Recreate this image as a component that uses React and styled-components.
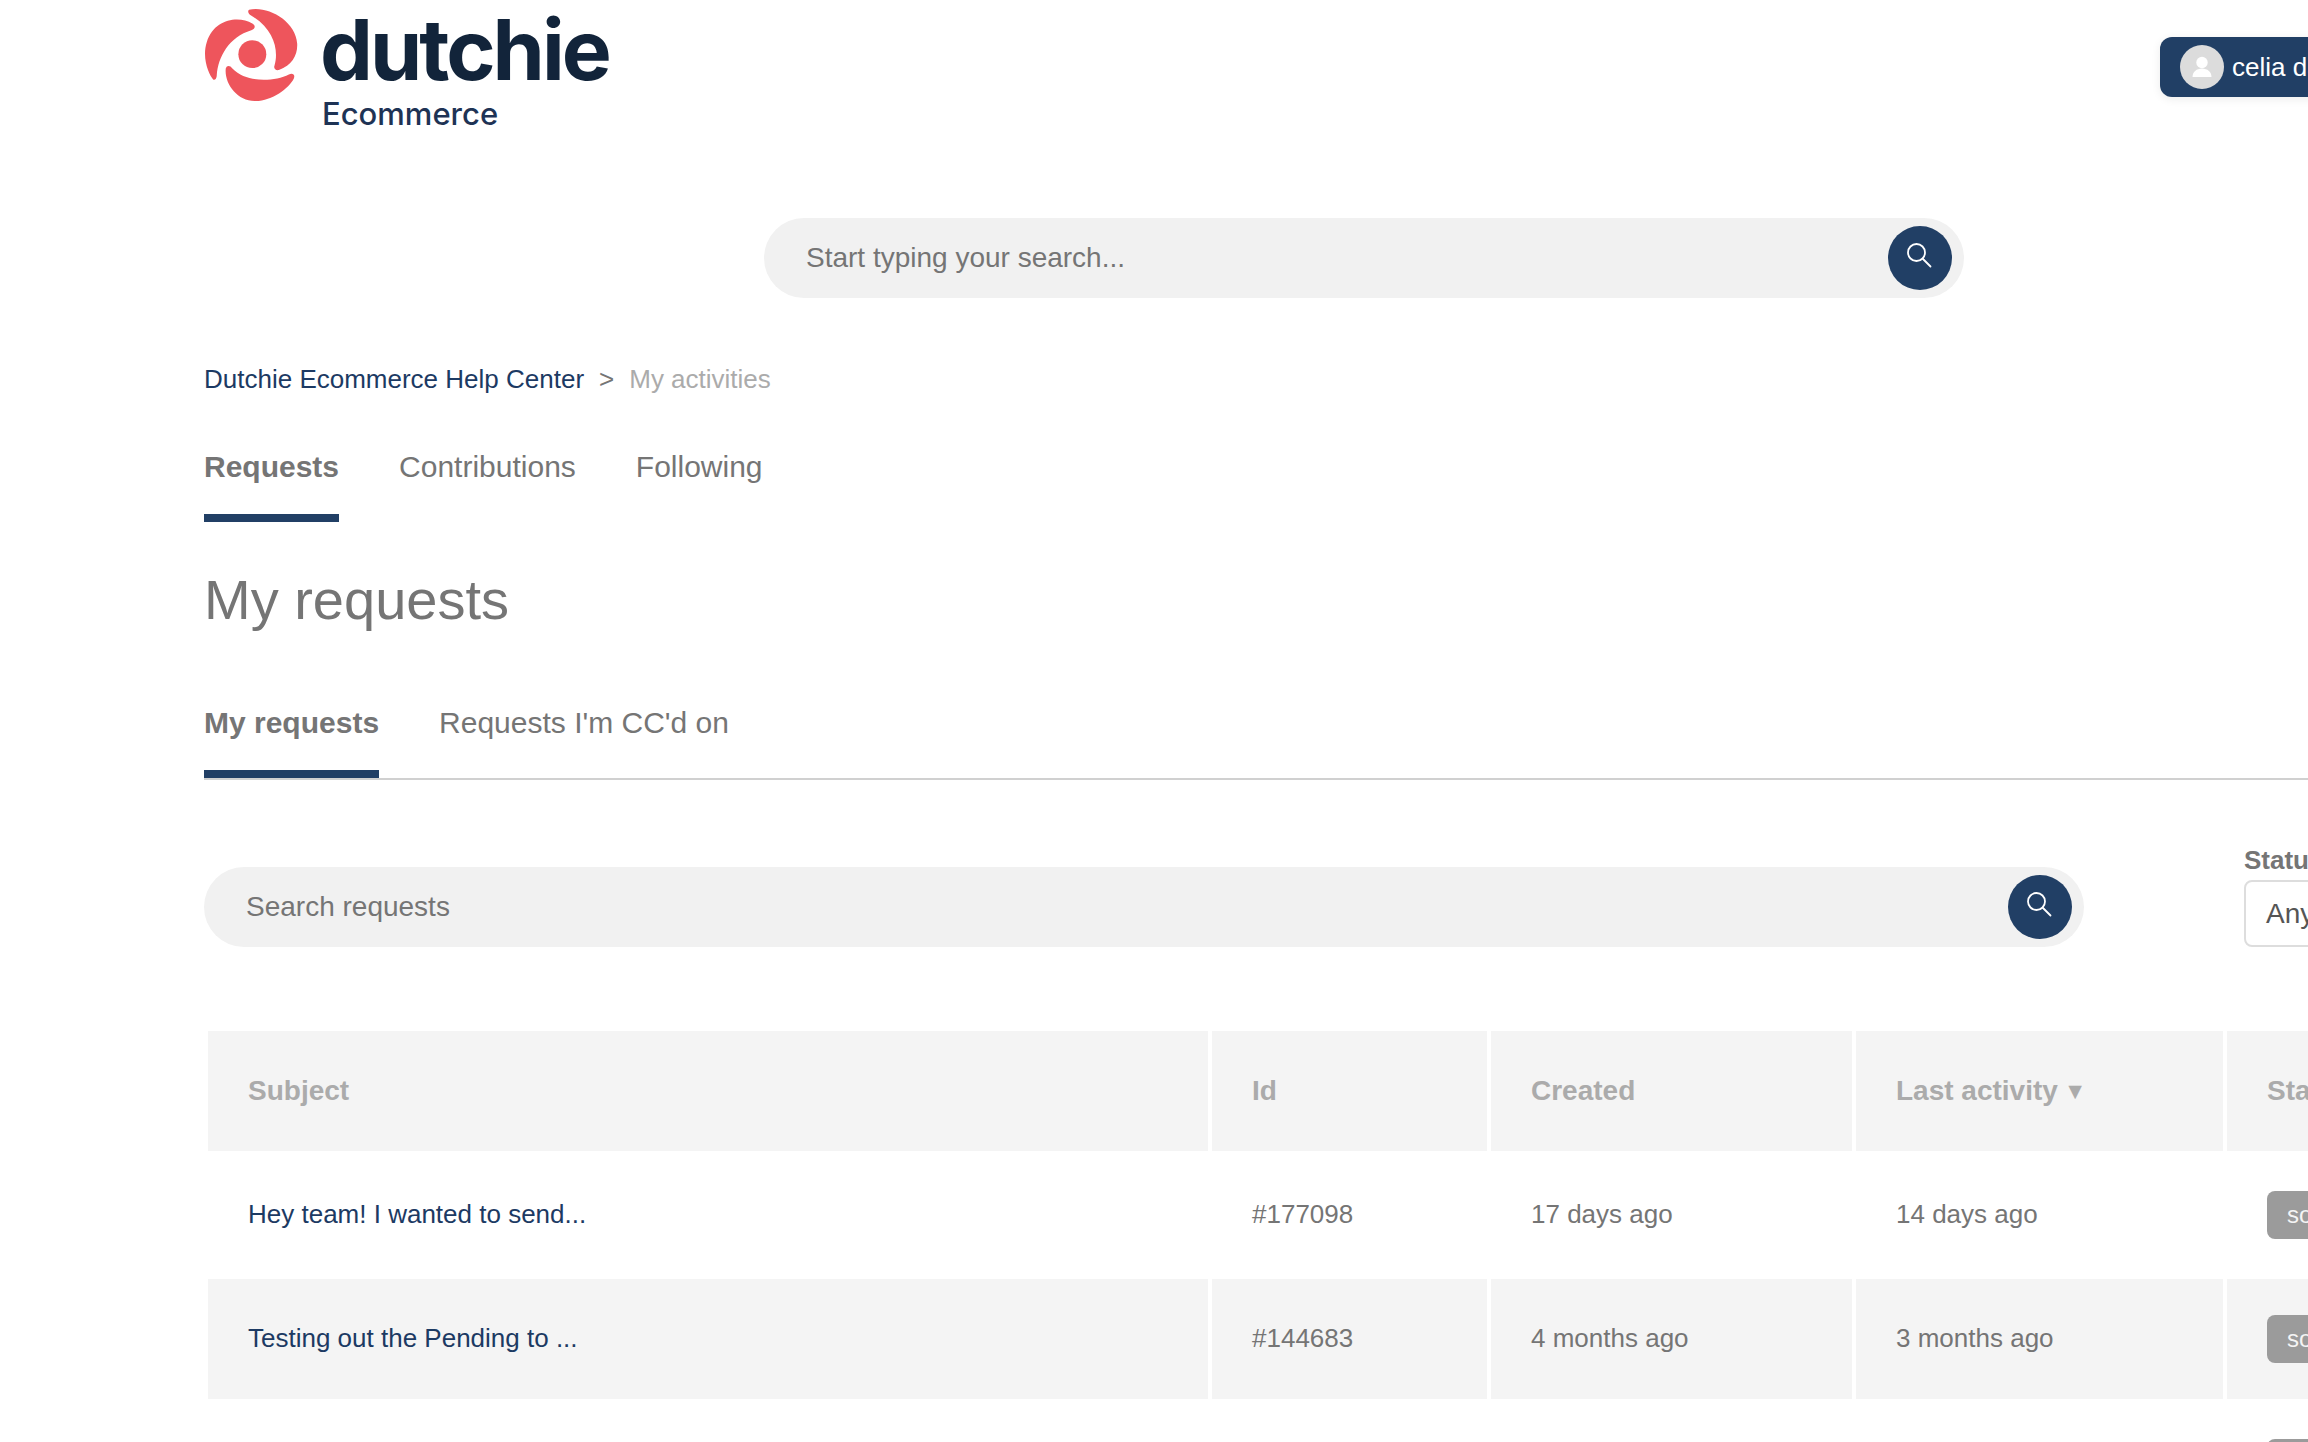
import React from 'react';
import styled, { createGlobalStyle } from 'styled-components';

const Global = createGlobalStyle`
  html, body { margin: 0; padding: 0; width: 2308px; height: 1442px; overflow: hidden; background: #fff; }
  body { font-family: "Liberation Sans", Arial, sans-serif; color: #757575; }
  * { box-sizing: border-box; }
`;
const Page = styled.div`width: 2728px; padding: 0 204px; display: flex; flex-direction: column;`;
const Header = styled.header`height: 218px; display: flex; justify-content: space-between; align-items: flex-start;`;
const Brand = styled.div`display: flex; align-items: flex-start; gap: 24px; padding-top: 7px;`;
const BrandText = styled.div`display: flex; flex-direction: column;`;
const Wordmark = styled.div`font-family: Inter, sans-serif; font-weight: 700; font-size: 84px; line-height: 84px; letter-spacing: -3px; color: #12243a; margin-left: -2px; margin-top: 1px;`;
const Sub = styled.div`font-family: Inter, sans-serif; font-weight: 500; font-size: 31px; line-height: 36px; color: #1e3355; margin-top: 4px;`;
const UserButton = styled.div`margin-top: 37px; margin-right: -4px; width: 368px; height: 60px; background: #213f65; border-radius: 12px; display: flex; align-items: center; padding-left: 20px; gap: 8px; color: #fff; font-size: 26px; box-shadow: 0 2px 10px rgba(0,0,0,.08);`;
const Avatar = styled.span`width: 44px; height: 44px; border-radius: 50%; background: #dcdcdc; display: flex; align-items: center; justify-content: center;`;
const SearchBar = styled.div`height: 80px; border-radius: 40px; background: #f1f1f1; display: flex; align-items: center; justify-content: space-between; padding: 0 12px 0 42px; font-size: 28px; color: #757575; width: ${p => p.$w}px;`;
const HeroSearch = styled.div`display: flex; justify-content: center;`;
const SearchBtn = styled.span`width: 64px; height: 64px; border-radius: 50%; background: #213f65; display: flex; align-items: center; justify-content: center; padding: 0 3px 6px 0;`;
const Crumbs = styled.nav`margin-top: 66px; display: flex; gap: 15px; font-size: 26px; line-height: 30px;`;
const CrumbLink = styled.span`color: #1c3a63;`;
const CrumbSep = styled.span`color: #757575;`;
const CrumbCur = styled.span`color: #ababab;`;
const Tabs = styled.div`display: flex; gap: 60px; margin-top: ${p => p.$mt}px; ${p => p.$line ? 'border-bottom: 2px solid #d0d0d0;' : ''}`;
const Tab = styled.div`font-size: 30px; line-height: 36px; padding-bottom: ${p => p.$pb}px; color: #757575; font-weight: ${p => p.$active ? 700 : 400}; ${p => p.$active ? `box-shadow: inset 0 -8px 0 #213f65;` : ''}`;
const Title = styled.h1`margin: 45px 0 0; font-size: 56px; line-height: 66px; font-weight: 400; color: #757575;`;
const FilterRow = styled.div`display: flex; align-items: flex-end; margin-top: 65px; gap: 160px;`;
const StatusField = styled.div`display: flex; flex-direction: column; width: 280px;`;
const StatusLabel = styled.label`font-size: 26px; font-weight: 700; line-height: 30px; color: #757575; margin-bottom: 5px;`;
const StatusSelect = styled.div`height: 67px; border: 2px solid #ddd; border-radius: 8px; padding-left: 20px; display: flex; align-items: center; font-size: 28px; color: #555;`;
const Table = styled.table`margin-top: 80px; width: 2320px; border-spacing: 4px; border-collapse: separate; table-layout: fixed;`;
const Th = styled.th`height: 120px; padding: 0 40px; background: #f4f4f4; text-align: left; font-size: 28px; font-weight: 700; color: #ababab;`;
const Td = styled.td`height: 120px; padding: 0 40px; font-size: 26px; color: #757575; background: ${p => p.$shade ? '#f4f4f4' : '#fff'};`;
const CellText = styled.span`position: relative; top: -1px; color: ${p => p.$link ? '#1c3a63' : '#757575'};`;
const Badge = styled.span`display: inline-block; height: 48px; line-height: 48px; padding: 0 20px; background: #9b9b9b; color: #f4f4f4; border-radius: 8px; font-size: 24px;`;
const Caret = styled.span`font-size: 23px; margin-left: 6px; vertical-align: 1px;`;

const Logo = () => (
  <svg width="94" height="95" viewBox="70 20 282 286" fill="#ee555c">
    <circle cx="215" cy="162" r="42" />
    <path d="M205 28C260 15 345 60 350 130C352 165 335 195 295 210C285 212 278 205 282 195C295 150 280 85 210 45C203 40 200 32 205 28Z" />
    <path d="M215 70C175 45 100 55 78 125C62 175 85 225 97 238C105 242 108 232 108 225C112 170 145 110 212 90C225 85 225 75 215 70Z" />
    <path d="M135 205C130 250 170 305 225 303C275 302 325 265 340 235C345 222 335 218 325 223C280 245 200 250 155 205C148 195 138 195 135 205Z" />
  </svg>
);
const SearchIcon = () => (
  <svg width="26" height="26" viewBox="0 0 26 26" fill="none" stroke="#fff" strokeWidth="1.8" strokeLinecap="round">
    <circle cx="10.5" cy="10.5" r="8.5" />
    <path d="M17 17l7.5 7.5" />
  </svg>
);
const UserIcon = () => (
  <svg width="24" height="24" viewBox="0 0 24 24" fill="#fff">
    <circle cx="12" cy="7.5" r="5.7" />
    <path d="M2.5 22c0-5 4-8.5 9.5-8.5s9.5 3.5 9.5 8.5z" />
  </svg>
);
const rows = [
  { s: 'Hey team! I wanted to send...', id: '#177098', c: '17 days ago', l: '14 days ago' },
  { s: 'Testing out the Pending to ...', id: '#144683', c: '4 months ago', l: '3 months ago', shade: true },
  { s: '', id: '', c: '', l: '' },
];

export default function App() {
  return (
    <Page>
      <Global />
      <Header>
        <Brand>
          <Logo />
          <BrandText>
            <Wordmark>dutchie</Wordmark>
            <Sub>Ecommerce</Sub>
          </BrandText>
        </Brand>
        <UserButton><Avatar><UserIcon /></Avatar>celia dasilva</UserButton>
      </Header>
      <HeroSearch>
        <SearchBar $w={1200}>Start typing your search...<SearchBtn><SearchIcon /></SearchBtn></SearchBar>
      </HeroSearch>
      <Crumbs>
        <CrumbLink>Dutchie Ecommerce Help Center</CrumbLink>
        <CrumbSep>&gt;</CrumbSep>
        <CrumbCur>My activities</CrumbCur>
      </Crumbs>
      <Tabs $mt={55}>
        <Tab $active $pb={37}>Requests</Tab>
        <Tab $pb={37}>Contributions</Tab>
        <Tab $pb={37}>Following</Tab>
      </Tabs>
      <Title>My requests</Title>
      <Tabs $mt={72} $line>
        <Tab $active $pb={37}>My requests</Tab>
        <Tab $pb={37}>Requests I'm CC'd on</Tab>
      </Tabs>
      <FilterRow>
        <SearchBar $w={1880}>Search requests<SearchBtn><SearchIcon /></SearchBtn></SearchBar>
        <StatusField>
          <StatusLabel>Status:</StatusLabel>
          <StatusSelect>Any</StatusSelect>
        </StatusField>
      </FilterRow>
      <Table>
        <colgroup>
          <col style={{ width: 1000 }} /><col style={{ width: 275 }} /><col style={{ width: 361 }} /><col style={{ width: 367 }} /><col />
        </colgroup>
        <thead>
          <tr>
            <Th>Subject</Th><Th>Id</Th><Th>Created</Th><Th>Last activity<Caret>▼</Caret></Th><Th>Status</Th>
          </tr>
        </thead>
        <tbody>
          {rows.map((r, i) => (
            <tr key={i}>
              <Td $shade={r.shade}><CellText $link>{r.s}</CellText></Td>
              <Td $shade={r.shade}><CellText>{r.id}</CellText></Td>
              <Td $shade={r.shade}><CellText>{r.c}</CellText></Td>
              <Td $shade={r.shade}><CellText>{r.l}</CellText></Td>
              <Td $shade={r.shade}><Badge>solved</Badge></Td>
            </tr>
          ))}
        </tbody>
      </Table>
    </Page>
  );
}
